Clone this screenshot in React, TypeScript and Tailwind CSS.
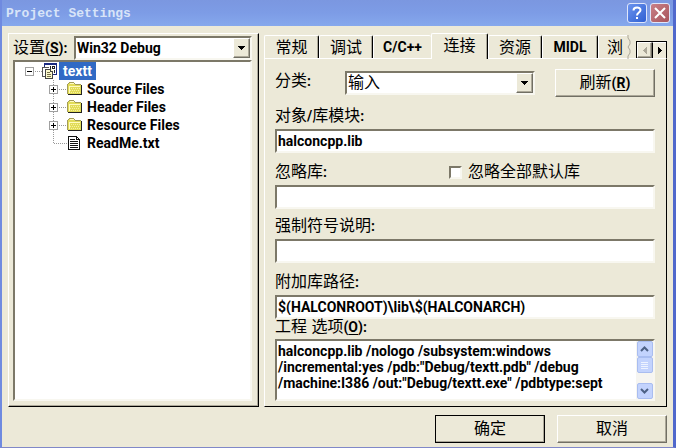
import { useState, type ReactNode } from "react";

const latin = "font-['Roboto','Liberation_Sans',sans-serif] text-[14px] font-bold";
const sunken =
  "border-2 border-t-[#7c7868] border-l-[#7c7868] border-r-[#f8f7f0] border-b-[#f8f7f0] bg-white";
const raised =
  "border border-t-white border-l-white border-r-[#716f64] border-b-[#716f64] bg-[#ece9d8] shadow-[inset_-1px_-1px_0_#aca899]";

const folders = ["Source Files", "Header Files", "Resource Files"];

const tabs = [
  { id: "general", label: "常规", width: "w-[55px]" },
  { id: "debug", label: "调试", width: "w-[54px]" },
  { id: "cpp", label: "C/C++", width: "w-[58px]", latin: true },
  { id: "link", label: "连接", width: "w-[57px]" },
  { id: "resources", label: "资源", width: "w-[54px]" },
  { id: "midl", label: "MIDL", width: "w-[56px]", latin: true },
];

function B({ children }: { children: ReactNode }) {
  return <span className={latin}>{children}</span>;
}

// keyboard accelerator, drawn as (X)
function Key({ letter }: { letter: string }) {
  return (
    <B>
      (<span className="underline underline-offset-2">{letter}</span>)
    </B>
  );
}

function Combo({ id, value, className }: { id: string; value: ReactNode; className: string }) {
  return (
    <div className={`relative h-6 ${sunken} ${className}`}>
      <select id={id} className="block h-5 w-full appearance-none truncate pr-5 pl-px leading-5 outline-none">
        <option>{value}</option>
      </select>
      <span className={`pointer-events-none absolute top-0 right-0 flex h-5 w-[17px] items-center justify-center ${raised}`}>
        <svg width="7" height="4" viewBox="0 0 7 4" shapeRendering="crispEdges">
          <path d="M0 0h7v1H6v1H5v1H4v1H3V3H2V2H1V1H0z" />
        </svg>
      </span>
    </div>
  );
}

function Field({ id, label, value = "" }: { id: string; label: ReactNode; value?: string }) {
  return (
    <>
      <label htmlFor={id} className="block h-5 leading-5">
        {label}
      </label>
      <input
        id={id}
        defaultValue={value}
        className={`mt-[3px] block h-6 w-full px-px outline-none ${latin} ${sunken}`}
      />
    </>
  );
}

function Expander({ open = false }: { open?: boolean }) {
  return (
    <svg width="18" height="18" viewBox="0 0 18 18" shapeRendering="crispEdges" fill="none">
      {!open && <path d="M4.5 0v18" stroke="#999" strokeDasharray="1 1" />}
      <path d="M10 9.5h8" stroke="#999" strokeDasharray="1 1" />
      <rect x="0.5" y="5.5" width="8" height="8" fill="#fff" stroke="#a0a0a0" />
      <path d="M2 9.5h5" stroke="#000" />
      {!open && <path d="M4.5 7v5" stroke="#000" />}
    </svg>
  );
}

function ProjectIcon() {
  return (
    <svg width="16" height="16" viewBox="0 0 16 16" shapeRendering="crispEdges">
      <path d="M2 1h13v11H2z" fill="#fff" />
      <path d="M2 0h13v2H2zM2 2h1v2H2zM14 2h1v10h-1zM11 11h4v1h-4z" fill="#1a2a80" />
      <path d="M8 3h1v3H8zM10 3h3v1h-3zM10 5h3v1h-3zM10 4h1v1h-1zM12 4h1v1h-1zM12 7h1v3h-1z" fill="#222" />
      <path d="M0 4h7v10H0z" fill="#fff" />
      <path d="M0 4h7v1H1v8h2v1H0z" fill="#555" />
      <path d="M3 6h6l2 2v8H3z" fill="#fbf9cc" />
      <path d="M3 6h6v1H4v8h6V8h1v8H3zM8 7h1v1h1v1H8z" fill="#444" />
      <path d="M5 9h3v1H5zM5 11h4v1H5zM5 13h4v1H5z" fill="#77704a" />
    </svg>
  );
}

function FolderIcon() {
  return (
    <svg width="16" height="16" viewBox="0 0 16 16" shapeRendering="crispEdges">
      <path d="M1 3h1V2h5v1h1v1h6v9H1z" fill="#e2dc58" />
      <path d="M2 5h11v1H2zM2 5h1v7H2zM3 2h4v1H3z" fill="#fffbc0" />
      <path d="M4 7.5h9M3 9.5h10M4 11.5h9" stroke="#f6f2a0" strokeDasharray="1 1" />
      <path d="M0 3h1v10H0zM1 2h1v1H1zM2 1h5v1H2zM7 2h1v1H7zM8 3h6v1H8z" fill="#a39c58" />
      <path d="M14 4h1v10H1v-1h13z" fill="#222" />
    </svg>
  );
}

function FileIcon() {
  return (
    <svg width="16" height="16" viewBox="0 0 16 16" shapeRendering="crispEdges">
      <path d="M1 1h9l3 3v11H1z" fill="#fff" />
      <path d="M1 1h9v1H2v12h10V5h1v10H1zM9 2h1v2h2v1H9zM10 2h1v1h-1zM11 3h1v1h-1zM12 4h1v1h-1z" fill="#111" />
      <path d="M3 4h5v1H3zM3 6h8v1H3zM3 8h8v1H3zM3 10h8v1H3zM3 12h8v1H3z" fill="#111" />
    </svg>
  );
}

function FileTree() {
  return (
    <ul className={`flex-1 ${sunken} ${latin}`}>
      <li>
        <div className="flex h-[18px] items-center pl-[10px]">
          <span className="w-[17px] overflow-hidden">
            <Expander open />
          </span>
          <ProjectIcon />
          <span className="ml-px h-[18px] bg-[#316ac5] px-1 leading-[18px] text-white">textt</span>
        </div>
        <ul>
          {folders.map((name) => (
            <li key={name} className="flex h-[18px] items-center pl-[34px]">
              <Expander />
              <FolderIcon />
              <span className="ml-1">{name}</span>
            </li>
          ))}
          <li className="flex h-[18px] items-center pl-[34px]">
            <svg width="18" height="18" viewBox="0 0 18 18" shapeRendering="crispEdges" fill="none">
              <path d="M4.5 0v9M5 9.5h13" stroke="#999" strokeDasharray="1 1" />
            </svg>
            <FileIcon />
            <span className="ml-1">ReadMe.txt</span>
          </li>
        </ul>
      </li>
    </ul>
  );
}

function TitleBar() {
  const caption = "flex h-5 w-5 items-center justify-center rounded-[3px] border border-[#dfe6fb] text-white";
  return (
    <header className="flex h-[26px] items-center gap-[3px] bg-linear-to-b from-[#7b97e0] via-[#7d9ce6] to-[#86a8ec] pr-[3px] pl-1">
      <h1 className="flex-1 pt-[2px] font-['Liberation_Mono',monospace] text-[13px] font-bold text-[#d8e4f8]">
        Project Settings
      </h1>
      <button type="button" aria-label="Help" className={`${caption} bg-linear-to-br from-[#6b93ee] to-[#2f5fd2]`}>
        <svg width="10" height="14" viewBox="0 0 10 14" fill="none" stroke="currentColor" strokeWidth="2">
          <path d="M1.5 4.5C1.5 0.5 8.5 0.5 8.5 4C8.5 6.5 5 6.5 5 9.5M5 11v2" />
        </svg>
      </button>
      <button type="button" aria-label="Close" className={`${caption} bg-linear-to-br from-[#c98088] to-[#a8545c]`}>
        <svg width="12" height="12" viewBox="0 0 12 12" stroke="currentColor" strokeWidth="2">
          <path d="M1 1l10 10M11 1L1 11" />
        </svg>
      </button>
    </header>
  );
}

function TabStrip() {
  const [active, setActive] = useState("link");
  return (
    <div className="relative z-10 -mb-px flex h-[26px] items-end">
      <div role="tablist" className="flex min-w-0 flex-1 items-end overflow-hidden">
        {tabs.map((tab) => (
          <button
            key={tab.id}
            type="button"
            role="tab"
            aria-selected={tab.id === active}
            onClick={() => setActive(tab.id)}
            className={`shrink-0 rounded-t-[2px] border-t border-l border-white bg-[#ece9d8] text-center ${tab.width} ${
              tab.latin ? latin : ""
            } ${
              tab.id === active ? "h-[26px] pb-[2px]" : "mb-px h-[23px]"
            } ${tab.id === "cpp" ? "" : "border-r border-r-black shadow-[inset_-1px_0_0_#aca899]"}`}
          >
            {tab.label}
          </button>
        ))}
        <button
          type="button"
          role="tab"
          aria-selected={false}
          className="mb-px h-[23px] w-[29px] shrink-0 overflow-hidden rounded-tl-[2px] border-t border-l border-white pl-2 text-left"
        >
          浏
        </button>
        {/* torn edge where the strip is cut off */}
        <svg width="4" height="24" viewBox="0 0 4 24" className="shrink-0" fill="none" stroke="#aca899">
          <path d="M1 0v3l2 3v3l-2 3 2 3v3l-2 3v3" />
        </svg>
      </div>
      <div className="mb-px flex h-[17px] w-[31px] border border-b-0 border-black">
        <button type="button" aria-label="Scroll left" className={`flex flex-1 items-center justify-center ${raised}`}>
          <svg width="4" height="7" viewBox="0 0 4 7" shapeRendering="crispEdges" fill="#aca899">
            <path d="M3 0h1v7H3V6H2V5H1V4H0V3h1V2h1V1h1z" />
          </svg>
        </button>
        <button
          type="button"
          aria-label="Scroll right"
          className="flex flex-1 items-center justify-center border-t border-l border-t-white border-l-black"
        >
          <svg width="4" height="7" viewBox="0 0 4 7" shapeRendering="crispEdges">
            <path d="M0 0h1v1h1v1h1v1h1v1H3v1H2v1H1v1H0z" />
          </svg>
        </button>
      </div>
    </div>
  );
}

function ScrollBar() {
  const part = "flex h-4 w-4 items-center justify-center rounded-[2px] border border-[#a9bdf0] bg-[#c3d3fd]";
  return (
    <div className="flex w-[17px] flex-col items-center bg-[#f6f5f1]">
      <button type="button" aria-label="Scroll up" className={part}>
        <svg width="9" height="6" viewBox="0 0 9 6" fill="none" stroke="#4d6185" strokeWidth="2">
          <path d="M1 5l3.5-3.5L8 5" />
        </svg>
      </button>
      <span className={part}>
        <svg width="8" height="7" viewBox="0 0 8 7" shapeRendering="crispEdges" fill="none" stroke="#eef3ff">
          <path d="M0 0.5h7M0 2.5h7M0 4.5h7M0 6.5h7" />
        </svg>
      </span>
      <button type="button" aria-label="Scroll down" className={`mt-auto ${part}`}>
        <svg width="9" height="6" viewBox="0 0 9 6" fill="none" stroke="#4d6185" strokeWidth="2">
          <path d="M1 1l3.5 3.5L8 1" />
        </svg>
      </button>
    </div>
  );
}

const options = `halconcpp.lib /nologo /subsystem:windows
/incremental:yes /pdb:"Debug/textt.pdb" /debug
/machine:I386 /out:"Debug/textt.exe" /pdbtype:sept`;

function LinkPage() {
  return (
    <div className="flex-1 border border-t-white border-r-black border-b-black border-l-white pt-[10px] pr-[11px] pb-[5px] pl-[10px]">
      <div className="flex items-start">
        <label htmlFor="category" className="w-[70px] leading-6">
          分类<B>:</B>
        </label>
        <Combo id="category" value="输入" className="mt-[2px] flex-1" />
        <button type="button" className={`ml-5 h-7 w-[100px] ${raised}`}>
          刷新
          <Key letter="R" />
        </button>
      </div>
      <div className="mt-[9px]">
        <Field id="modules" label={<>对象<B>/</B>库模块<B>:</B></>} value="halconcpp.lib" />
      </div>
      <div className="relative mt-[9px]">
        <Field id="ignore" label={<>忽略库<B>:</B></>} />
        <label className="absolute top-0 right-[75px] flex h-5 items-center gap-[6px] leading-5">
          <input type="checkbox" className={`h-[13px] w-[13px] appearance-none ${sunken}`} />
          忽略全部默认库
        </label>
      </div>
      <div className="mt-[7px]">
        <Field id="symbols" label={<>强制符号说明<B>:</B></>} />
      </div>
      <div className="mt-[9px]">
        <Field id="paths" label={<>附加库路径<B>:</B></>} value="$(HALCONROOT)\lib\$(HALCONARCH)" />
      </div>
      <label htmlFor="options" className="block h-5 leading-4">
        工程 选项
        <Key letter="O" />
        <B>:</B>
      </label>
      <div className={`flex h-[62px] ${sunken}`}>
        <textarea
          id="options"
          defaultValue={options}
          className={`min-w-0 flex-1 resize-none overflow-hidden px-px pt-[2px] leading-4 whitespace-pre outline-none ${latin}`}
        />
        <ScrollBar />
      </div>
    </div>
  );
}

export default function App() {
  return (
    <div className="flex min-h-screen flex-col border-r-[3px] border-b border-l-2 border-r-[#5068cc] border-b-[#8088c8] border-l-[#6f8ae0] bg-[#ece9d8] font-['Liberation_Sans','Noto_Sans_CJK_SC',sans-serif] text-[16px] text-black">
      <TitleBar />
      <main className="flex flex-1 flex-col pt-[7px] pr-[6px] pb-1 pl-[6px]">
        <div className="grid flex-1 grid-cols-[251fr_403fr] gap-x-[5px]">
          <section className="flex min-w-0 flex-col border border-t-white border-r-black border-b-black border-l-white pt-[2px] pr-[6px] pb-[5px] pl-1 shadow-[inset_-1px_-1px_0_#aca899]">
            <div className="flex items-center">
              <label htmlFor="config" className="w-[61px]">
                设置
                <Key letter="S" />
                <B>:</B>
              </label>
              <Combo id="config" value="Win32 Debug" className={`flex-1 ${latin}`} />
            </div>
            <FileTree />
          </section>
          <section className="flex min-w-0 flex-col">
            <TabStrip />
            <LinkPage />
          </section>
        </div>
        <div className="mt-2 flex justify-end gap-3">
          <button type="button" className={`h-7 w-[110px] outline -outline-offset-1 outline-black ${raised}`}>
            确定
          </button>
          <button type="button" className={`h-7 w-[110px] ${raised}`}>
            取消
          </button>
        </div>
      </main>
    </div>
  );
}
